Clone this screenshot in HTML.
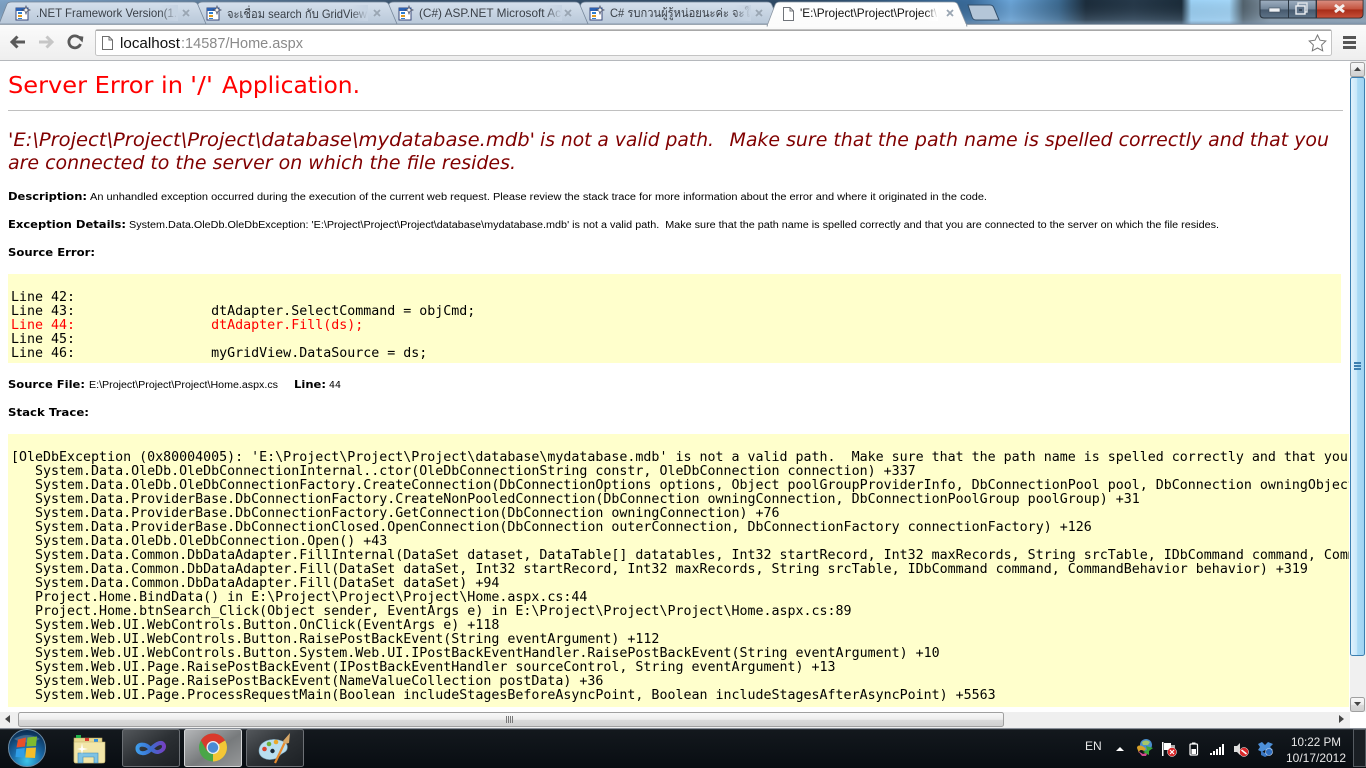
<!DOCTYPE html>
<html><head><meta charset="utf-8"><title>Server Error</title>
<style>
html,body{margin:0;padding:0;width:1366px;height:768px;overflow:hidden;background:#fff}
svg{display:block}
text{white-space:pre}
.tab{font:12px "Liberation Sans","WenQuanYi Zen Hei",sans-serif;fill:#3a4048}
.lab{font:bold 11px "DejaVu Sans",sans-serif;fill:#000}
.sm{font:10px "Liberation Sans",sans-serif;fill:#000}
.mono{font:13.305px "DejaVu Sans Mono","Liberation Mono",monospace;fill:#000}
.tray{font:12px "Liberation Sans",sans-serif;fill:#e8e8e8}
</style></head><body>
<svg xmlns="http://www.w3.org/2000/svg" width="1366" height="768" viewBox="0 0 1366 768">
<defs>
<linearGradient id="sky" x1="0" x2="1" y1="0" y2="0">
<stop offset="0" stop-color="#7fa4c8"/><stop offset=".3" stop-color="#39536d"/><stop offset=".6" stop-color="#2e4a66"/>
<stop offset=".71" stop-color="#3a6c9c"/><stop offset=".74" stop-color="#6ba5d8"/><stop offset=".775" stop-color="#3d6b92"/>
<stop offset=".795" stop-color="#1c2d3c"/><stop offset=".83" stop-color="#26394a"/><stop offset=".865" stop-color="#1b2c3a"/>
<stop offset=".872" stop-color="#9dd2f6"/><stop offset=".9" stop-color="#a3d6f8"/><stop offset=".91" stop-color="#54646f"/>
<stop offset=".93" stop-color="#8496a6"/><stop offset="1" stop-color="#8a9cae"/>
</linearGradient>
<linearGradient id="skyv" x1="0" x2="0" y1="0" y2="1"><stop offset="0" stop-color="#000" stop-opacity="0"/><stop offset=".8" stop-color="#9fb8cf" stop-opacity=".22"/><stop offset="1" stop-color="#6c8199" stop-opacity=".8"/></linearGradient>
<linearGradient id="tabg" x1="0" x2="0" y1="0" y2="1"><stop offset="0" stop-color="#d5e0ec"/><stop offset="1" stop-color="#b9c8d9"/></linearGradient>
<linearGradient id="atab" x1="0" x2="0" y1="0" y2="1"><stop offset="0" stop-color="#fff"/><stop offset="1" stop-color="#fbfbfb"/></linearGradient>
<linearGradient id="tool" x1="0" x2="0" y1="0" y2="1"><stop offset="0" stop-color="#fbfbfb"/><stop offset="1" stop-color="#eeeeee"/></linearGradient>
<linearGradient id="fade" x1="0" x2="1" y1="0" y2="0"><stop offset="0" stop-color="#c6d3e2" stop-opacity="0"/><stop offset="1" stop-color="#c6d3e2"/></linearGradient>
<linearGradient id="fadew" x1="0" x2="1" y1="0" y2="0"><stop offset="0" stop-color="#fff" stop-opacity="0"/><stop offset="1" stop-color="#fff"/></linearGradient>
<linearGradient id="ctl" x1="0" x2="0" y1="0" y2="1"><stop offset="0" stop-color="#9fb0c2"/><stop offset=".5" stop-color="#73869a"/><stop offset=".55" stop-color="#475a6e"/><stop offset="1" stop-color="#5f7489"/></linearGradient>
<linearGradient id="cls" x1="0" x2="0" y1="0" y2="1"><stop offset="0" stop-color="#d99083"/><stop offset=".5" stop-color="#c5543f"/><stop offset=".55" stop-color="#a82c18"/><stop offset="1" stop-color="#c8513a"/></linearGradient>
<linearGradient id="hth" x1="0" x2="0" y1="0" y2="1"><stop offset="0" stop-color="#f9f9f9"/><stop offset=".5" stop-color="#ececec"/><stop offset=".55" stop-color="#dadada"/><stop offset="1" stop-color="#d0d0d0"/></linearGradient>
<linearGradient id="vth" x1="0" x2="1" y1="0" y2="0"><stop offset="0" stop-color="#e3f3fd"/><stop offset=".45" stop-color="#c8e7fa"/><stop offset=".5" stop-color="#aadaf5"/><stop offset="1" stop-color="#9fd3f1"/></linearGradient>
<linearGradient id="tb" x1="0" x2="0" y1="0" y2="1"><stop offset="0" stop-color="#14191e"/><stop offset="1" stop-color="#080d12"/></linearGradient>
<linearGradient id="b1" x1="0" x2="1" y1="0" y2="1"><stop offset="0" stop-color="#54585c"/><stop offset=".5" stop-color="#2c3034"/><stop offset="1" stop-color="#1c2024"/></linearGradient>
<linearGradient id="b2" x1="0" x2="1" y1="0" y2="1"><stop offset="0" stop-color="#b5b7b9"/><stop offset=".55" stop-color="#777a7c"/><stop offset="1" stop-color="#969899"/></linearGradient>
<radialGradient id="orb" cx=".5" cy=".85" r=".8"><stop offset="0" stop-color="#3ec5ea"/><stop offset=".5" stop-color="#1a6aa8"/><stop offset="1" stop-color="#0b2f55"/></radialGradient>
<linearGradient id="inf" gradientUnits="userSpaceOnUse" x1="135" x2="166" y1="748" y2="748"><stop offset="0" stop-color="#3fa2ee"/><stop offset=".5" stop-color="#3a6fd0"/><stop offset="1" stop-color="#7a3cc0"/></linearGradient>
<clipPath id="stk"><rect x="8" y="434" width="1341" height="273"/></clipPath>
<clipPath id="c1"><rect x="30" y="3" width="148" height="20"/></clipPath>
<clipPath id="c2"><rect x="222" y="3" width="146" height="20"/></clipPath>
<clipPath id="c3"><rect x="414" y="3" width="148" height="20"/></clipPath>
<clipPath id="c4"><rect x="606" y="3" width="145" height="20"/></clipPath>
<clipPath id="c5"><rect x="797" y="3" width="141" height="20"/></clipPath>
<path id="t" d="M-1 24L7 4Q8 2 12 2L193 2Q197 2 198 5L206 24Z"/>
<g id="fav"><rect x="0" y="2" width="12" height="12" fill="#fff" stroke="#3a4a7a"/><rect x="0" y="2" width="12" height="3" fill="#2c62b4"/><rect x="2" y="6" width="4" height="2" fill="#2e7fd0"/><rect x="2" y="9" width="4" height="2" fill="#e09a20"/><rect x="2" y="12" width="4" height="1" fill="#2e7fd0"/><path d="M10 0L11 3L14 4L11 5L10 8L9 5L6 4L9 3Z" fill="#fff" stroke="#404860" stroke-width=".7"/></g>
<path id="x" d="M0 0L6 6M6 0L0 6" stroke="#9aa6b3" stroke-width="1.800" fill="none"/>
</defs>

<!-- Aero background -->
<rect width="1366" height="25" fill="url(#sky)"/>
<rect width="1366" height="25" fill="url(#skyv)"/>

<!-- Tabs -->
<g fill="url(#tabg)" stroke="#76879a" stroke-width=".8">
<use href="#t" x="574"/><use href="#t" x="382"/><use href="#t" x="191"/><use href="#t" x="0"/>
</g>
<rect y="24" width="1366" height="1" fill="#9aa5b0"/>

<use href="#fav" x="16" y="6"/><use href="#fav" x="207" y="6"/><use href="#fav" x="399" y="6"/><use href="#fav" x="590" y="6"/>
<g clip-path="url(#c1)"><text class="tab" x="36" y="17" textLength="141" lengthAdjust="spacingAndGlyphs">.NET Framework Version(1.</text></g>
<rect x="160" y="5" width="18" height="16" fill="url(#fade)"/>
<g clip-path="url(#c2)"><text class="tab" x="227" y="18" textLength="140" lengthAdjust="spacingAndGlyphs">จะเชื่อม search กับ GridView</text></g>
<rect x="351" y="5" width="17" height="16" fill="url(#fade)"/>
<g clip-path="url(#c3)"><text class="tab" x="419" y="17" textLength="142" lengthAdjust="spacingAndGlyphs">(C#) ASP.NET Microsoft Ac</text></g>
<rect x="545" y="5" width="17" height="16" fill="url(#fade)"/>
<g clip-path="url(#c4)"><text class="tab" x="610" y="17" textLength="140" lengthAdjust="spacingAndGlyphs">C# รบกวนผู้รู้หน่อยนะค่ะ จะใ</text></g>
<rect x="734" y="5" width="17" height="16" fill="url(#fade)"/>
<use href="#x" x="183" y="10"/><use href="#x" x="374" y="10"/><use href="#x" x="565" y="10"/><use href="#x" x="756" y="10"/>

<!-- Toolbar -->
<rect y="25" width="1366" height="35" fill="url(#tool)"/>
<rect y="60" width="1366" height="1" fill="#b5b8bc"/>

<!-- Active tab -->
<path d="M767 26L775 5Q776 2 780 2L953 2Q957 2 958 5L967 26Z" fill="url(#atab)" stroke="#8b96a2" stroke-width=".8"/>
<rect x="768" y="24" width="198" height="3" fill="#fcfcfc"/>
<path d="M783.500 7.500H790L793.500 11V20.500H783.500Z M790 7.500V11H793.500" fill="#fff" stroke="#70747a"/>
<g clip-path="url(#c5)"><text class="tab" x="800" y="17" style="fill:#111" textLength="137" lengthAdjust="spacingAndGlyphs">'E:\Project\Project\Project\</text></g>
<rect x="925" y="5" width="13" height="16" fill="url(#fadew)"/>
<use href="#x" x="947" y="10"/>

<!-- New tab button -->
<path d="M968 5L990 5Q993 5 994 8L999 20L976 20Q973 20 972 17Z" fill="#b4c6d8" stroke="#33506c" stroke-width="1"/>

<!-- Window controls -->
<path d="M1260 0V14Q1260 18 1264 18H1359Q1363 18 1363 14V0Z" fill="url(#ctl)" stroke="#28333e"/>
<path d="M1316 0H1363V14Q1363 18 1359 18H1316Z" fill="url(#cls)" stroke="#3a2a2a" stroke-width=".7"/>
<rect x="1288" y="0" width="1" height="18" fill="#2a3642"/>
<rect x="1316" y="0" width="1" height="18" fill="#2a3642"/>
<rect x="1269" y="8" width="11" height="4" fill="#eef1f4" stroke="#3b4a59" stroke-width=".6"/>
<rect x="1298" y="3" width="9" height="9" fill="none" stroke="#dfe4e9" stroke-width="1.400"/>
<rect x="1296" y="6" width="9" height="8" fill="#60748a" stroke="#eef1f4" stroke-width="1.400"/>
<rect x="1299" y="9" width="3" height="2" fill="#39485a"/>
<path d="M1335 5L1344 12M1344 5L1335 12" stroke="#f4f0ee" stroke-width="3"/>

<!-- Nav buttons -->
<path d="M25 42H12M17.500 36.500L12 42L17.500 47.500" fill="none" stroke="#5a5a5a" stroke-width="3"/>
<path d="M39 42H52M46.500 36.500L52 42L46.500 47.500" fill="none" stroke="#c6c6c6" stroke-width="3"/>
<path d="M80.500 44A6 6 0 1 1 79 37.500" fill="none" stroke="#5a5a5a" stroke-width="2.800"/>
<path d="M75 36H83V42Z" fill="#5a5a5a" transform="rotate(8 79 39)"/>

<!-- Omnibox -->
<rect x="95.500" y="29.500" width="1236" height="26" rx="2" fill="#fff" stroke="#c4c4c4"/>
<rect x="96" y="30" width="1235" height="1" fill="#a8a8a8"/>
<path d="M102.500 36.500H109L112.500 40V49.500H102.500Z M109 36.500V40H112.500" fill="#fff" stroke="#6e6e6e"/>
<text x="120" y="48" font-family="Liberation Sans" font-size="14.500" textLength="60" lengthAdjust="spacingAndGlyphs" fill="#111">localhost</text>
<text x="181" y="48" font-family="Liberation Sans" font-size="14.500" textLength="122" lengthAdjust="spacingAndGlyphs" fill="#8a8a8a">:14587/Home.aspx</text>
<path d="M1317.500 35L1320 40.200L1325.800 41L1321.600 45L1322.700 50.800L1317.500 48L1312.300 50.800L1313.400 45L1309.200 41L1315 40.200Z" fill="#fff" stroke="#777" stroke-width="1"/>
<rect x="1343" y="36" width="13" height="3" fill="#555"/><rect x="1343" y="41" width="13" height="3" fill="#555"/><rect x="1343" y="46" width="13" height="3" fill="#555"/>

<!-- Page -->
<rect y="61" width="1366" height="667" fill="#fff"/>
<g font-family="DejaVu Sans" font-size="23" fill="#f00">
<text x="8" y="93" textLength="175" lengthAdjust="spacingAndGlyphs">Server Error in</text>
<text x="190" y="93" textLength="23" lengthAdjust="spacingAndGlyphs">'/'</text>
<text x="222" y="93" textLength="138" lengthAdjust="spacingAndGlyphs">Application.</text>
</g>
<rect x="8" y="110" width="1335" height="1" fill="#c0c0c0"/>
<g font-family="DejaVu Sans" font-style="italic" font-size="19" fill="#800000">
<text x="8" y="146" textLength="527" lengthAdjust="spacingAndGlyphs">'E:\Project\Project\Project\database\mydatabase.mdb'</text>
<text x="540" y="146" textLength="174" lengthAdjust="spacingAndGlyphs">is not a valid path.</text>
<text x="729.500" y="146" textLength="599.500" lengthAdjust="spacingAndGlyphs">Make sure that the path name is spelled correctly and that you</text>
<text x="8" y="169" textLength="508" lengthAdjust="spacingAndGlyphs">are connected to the server on which the file resides.</text>
</g>

<text class="lab" x="8" y="200" textLength="79" lengthAdjust="spacingAndGlyphs">Description:</text>
<text class="sm" x="90" y="200" textLength="897" lengthAdjust="spacingAndGlyphs">An unhandled exception occurred during the execution of the current web request. Please review the stack trace for more information about the error and where it originated in the code.</text>
<text class="lab" x="8" y="228" textLength="118" lengthAdjust="spacingAndGlyphs">Exception Details:</text>
<text class="sm" x="129" y="228" textLength="1090" lengthAdjust="spacingAndGlyphs">System.Data.OleDb.OleDbException: 'E:\Project\Project\Project\database\mydatabase.mdb' is not a valid path.  Make sure that the path name is spelled correctly and that you are connected to the server on which the file resides.</text>
<text class="lab" x="8" y="256" textLength="87" lengthAdjust="spacingAndGlyphs">Source Error:</text>

<rect x="8" y="274" width="1333" height="89" fill="#ffc"/>
<text class="mono" x="11" y="301">Line 42:</text>
<text class="mono" x="11" y="315">Line 43:                 dtAdapter.SelectCommand = objCmd;</text>
<text class="mono" x="11" y="329" style="fill:#f00">Line 44:                 dtAdapter.Fill(ds);</text>
<text class="mono" x="11" y="343">Line 45:</text>
<text class="mono" x="11" y="357">Line 46:                 myGridView.DataSource = ds;</text>

<text class="lab" x="8" y="388" textLength="77" lengthAdjust="spacingAndGlyphs">Source File:</text>
<text class="sm" x="89" y="388" textLength="189" lengthAdjust="spacingAndGlyphs">E:\Project\Project\Project\Home.aspx.cs</text>
<text class="lab" x="294" y="388" textLength="32" lengthAdjust="spacingAndGlyphs">Line:</text>
<text x="329" y="388" font-family="DejaVu Sans" font-size="10" textLength="12" lengthAdjust="spacingAndGlyphs">44</text>
<text class="lab" x="8" y="416" textLength="81" lengthAdjust="spacingAndGlyphs">Stack Trace:</text>

<rect x="8" y="434" width="1341" height="273" fill="#ffc"/>
<g clip-path="url(#stk)" class="mono">
<text class="mono" x="11" y="461">[OleDbException (0x80004005): 'E:\Project\Project\Project\database\mydatabase.mdb' is not a valid path.  Make sure that the path name is spelled correctly and that you are connected</text>
<text class="mono" x="11" y="475">   System.Data.OleDb.OleDbConnectionInternal..ctor(OleDbConnectionString constr, OleDbConnection connection) +337</text>
<text class="mono" x="11" y="489">   System.Data.OleDb.OleDbConnectionFactory.CreateConnection(DbConnectionOptions options, Object poolGroupProviderInfo, DbConnectionPool pool, DbConnection owningObject) +86</text>
<text class="mono" x="11" y="503">   System.Data.ProviderBase.DbConnectionFactory.CreateNonPooledConnection(DbConnection owningConnection, DbConnectionPoolGroup poolGroup) +31</text>
<text class="mono" x="11" y="517">   System.Data.ProviderBase.DbConnectionFactory.GetConnection(DbConnection owningConnection) +76</text>
<text class="mono" x="11" y="531">   System.Data.ProviderBase.DbConnectionClosed.OpenConnection(DbConnection outerConnection, DbConnectionFactory connectionFactory) +126</text>
<text class="mono" x="11" y="545">   System.Data.OleDb.OleDbConnection.Open() +43</text>
<text class="mono" x="11" y="559">   System.Data.Common.DbDataAdapter.FillInternal(DataSet dataset, DataTable[] datatables, Int32 startRecord, Int32 maxRecords, String srcTable, IDbCommand command, CommandBehavior behavior) +162</text>
<text class="mono" x="11" y="573">   System.Data.Common.DbDataAdapter.Fill(DataSet dataSet, Int32 startRecord, Int32 maxRecords, String srcTable, IDbCommand command, CommandBehavior behavior) +319</text>
<text class="mono" x="11" y="587">   System.Data.Common.DbDataAdapter.Fill(DataSet dataSet) +94</text>
<text class="mono" x="11" y="601">   Project.Home.BindData() in E:\Project\Project\Project\Home.aspx.cs:44</text>
<text class="mono" x="11" y="615">   Project.Home.btnSearch_Click(Object sender, EventArgs e) in E:\Project\Project\Project\Home.aspx.cs:89</text>
<text class="mono" x="11" y="629">   System.Web.UI.WebControls.Button.OnClick(EventArgs e) +118</text>
<text class="mono" x="11" y="643">   System.Web.UI.WebControls.Button.RaisePostBackEvent(String eventArgument) +112</text>
<text class="mono" x="11" y="657">   System.Web.UI.WebControls.Button.System.Web.UI.IPostBackEventHandler.RaisePostBackEvent(String eventArgument) +10</text>
<text class="mono" x="11" y="671">   System.Web.UI.Page.RaisePostBackEvent(IPostBackEventHandler sourceControl, String eventArgument) +13</text>
<text class="mono" x="11" y="685">   System.Web.UI.Page.RaisePostBackEvent(NameValueCollection postData) +36</text>
<text class="mono" x="11" y="699">   System.Web.UI.Page.ProcessRequestMain(Boolean includeStagesBeforeAsyncPoint, Boolean includeStagesAfterAsyncPoint) +5563</text>
</g>

<!-- Vertical scrollbar -->
<rect x="1350" y="61" width="16" height="651" fill="#f0f0f0"/>
<rect x="1350.500" y="62.500" width="14" height="14" rx="2" fill="url(#hth)" stroke="#a0a0a0"/>
<path d="M1354 71H1361L1357.500 67Z" fill="#444"/>
<rect x="1350.500" y="77.500" width="14" height="578" rx="2" fill="url(#vth)" stroke="#3c7fb1"/>
<g fill="#3c7fb1"><rect x="1354" y="362" width="7" height="2"/><rect x="1354" y="365" width="7" height="2"/><rect x="1354" y="368" width="7" height="2"/></g>
<rect x="1350.500" y="697.500" width="14" height="14" rx="2" fill="url(#hth)" stroke="#a0a0a0"/>
<path d="M1354 702H1361L1357.500 706Z" fill="#444"/>

<!-- Horizontal scrollbar -->
<rect x="0" y="712" width="1350" height="16" fill="#efefef"/>
<path d="M10 715V723L5 719Z" fill="#444"/>
<rect x="18.500" y="712.500" width="985" height="14" rx="2" fill="url(#hth)" stroke="#a0a0a0"/>
<g fill="#777"><rect x="506" y="716" width="1" height="7"/><rect x="508" y="716" width="1" height="7"/><rect x="510" y="716" width="1" height="7"/><rect x="512" y="716" width="1" height="7"/></g>
<path d="M1339 715V723L1344 719Z" fill="#444"/>
<rect x="1350" y="712" width="16" height="16" fill="#fff"/>

<!-- Taskbar -->
<rect y="728" width="1366" height="40" fill="url(#tb)"/>
<rect y="728" width="1366" height="1" fill="#8a9099"/>
<rect y="729" width="1366" height="1" fill="#2c3238"/>

<!-- Start orb -->
<circle cx="27" cy="748" r="18.500" fill="url(#orb)" stroke="#6b8ba5" stroke-width="1"/>
<path d="M14 739Q27 731 40 739Q27 746 14 739Z" fill="#fff" opacity=".2"/>
<path d="M18 739.500L26 737.500L25 746.500L16.500 747.500Z" fill="#e8502a"/>
<path d="M27.500 737.500L37 736.500L36 746L26.500 746.500Z" fill="#7fbb2f"/>
<path d="M16.300 749L24.800 748L23.800 757.500L15.500 757Z" fill="#2f9ee8"/>
<path d="M26.300 748L36 747.500L35 758L25.300 757.500Z" fill="#f4bd2a"/>

<!-- Folder -->
<path d="M74 738H102V763H76Q74 763 74 761Z" fill="#e8d88f" stroke="#b7a65e" stroke-width=".6"/>
<rect x="76" y="735" width="5" height="3" fill="#21b34a"/><rect x="85" y="738" width="4" height="3" fill="#d8382e"/><rect x="94" y="739" width="4" height="3" fill="#2e8fe0"/>
<path d="M74 742H105V761Q105 763 103 763H76Q74 763 74 761Z" fill="#f2e6a8" stroke="#bcae6a" stroke-width=".6"/>
<path d="M78 753H98V763H94V757H83V763H78Z" fill="#7fc3e4" stroke="#3f88b4" stroke-width=".6"/>
<path d="M82 743L83 748L88 749L83 750L82 754L81 750L77 749L81 748Z" fill="#fff"/>

<!-- Taskbar buttons -->
<rect x="122.500" y="729.500" width="57" height="37" rx="2" fill="url(#b1)" stroke="#6c7075"/>
<rect x="184.500" y="729.500" width="57" height="37" rx="2" fill="url(#b2)" stroke="#d4d6d8"/>
<rect x="246.500" y="729.500" width="57" height="37" rx="2" fill="url(#b1)" stroke="#6c7075"/>

<!-- VS infinity -->
<path d="M150 748.500C146 743.500 137 743 137.500 749C138 754.500 146 754.500 150.500 749.500C154.500 745 161 740.500 163.500 744.500C166 749 159 753.500 155 751.500C153 750.500 151.500 749 150 748.500Z" fill="none" stroke="url(#inf)" stroke-width="4"/>

<!-- Chrome -->
<circle cx="213" cy="747.500" r="14" fill="#4aa648"/>
<path d="M213 733.500A14 14 0 0 1 225.100 740.500L213 747.500L200.900 740.500A14 14 0 0 1 213 733.500Z" fill="#d9392c"/>
<path d="M225.100 740.500A14 14 0 0 1 213 761.500L213 747.500Z" fill="#f4c636"/>
<path d="M200.900 740.500L207 751L213 747.500Z" fill="#d9392c"/>
<circle cx="213" cy="747.500" r="6.500" fill="#e9eef4"/>
<circle cx="213" cy="747.500" r="5.200" fill="#4a8ad4"/>

<!-- Paint palette -->
<path d="M259 751C259 741 272 737 282 741C290 744 288 751 283 753C279 755 279 758 274 759C266 761 259 757 259 751Z" fill="#b9dff0" stroke="#7fa9c0" stroke-width=".6"/>
<circle cx="264.500" cy="749" r="2.300" fill="#d8432e"/><circle cx="269" cy="744" r="2.300" fill="#6cae38"/><circle cx="276" cy="742" r="2.300" fill="#eba92a"/><circle cx="272.500" cy="751" r="2.200" fill="#1a2a38"/>
<path d="M275 763L285 742" stroke="#e68a2e" stroke-width="2.200"/>
<path d="M283 741L290 733L289 743L285 744Z" fill="#d8a868"/>

<!-- Tray -->
<text class="tray" x="1085" y="750" font-size="11.500">EN</text>
<path d="M1116 751H1124L1120 747Z" fill="#fff"/>
<circle cx="1146" cy="745" r="6" fill="#4a8fcc"/><path d="M1142 742Q1146 739 1150 742L1148 745H1143Z" fill="#a6c66a"/>
<path d="M1137 748C1137 744 1143 745 1146 749L1144 751C1141 749 1139 750 1139 753Z" fill="#d8a028"/>
<path d="M1138 751L1143 754L1148 752L1146 756L1142 756Z" fill="#d34a8e"/>
<path d="M1146 746L1153 748L1149 751L1149 755L1143 752L1147 750Z" fill="#3aa838"/>
<rect x="1162" y="742" width="1.500" height="14" fill="#fff"/>
<path d="M1164 743H1171V750H1164Z" fill="#fff"/><path d="M1171 745H1175V748H1171Z" fill="#aaa"/>
<circle cx="1172" cy="752" r="4.500" fill="#d8282a" stroke="#fff" stroke-width=".5"/>
<path d="M1170 750L1174 754M1174 750L1170 754" stroke="#fff" stroke-width="1.200"/>
<rect x="1190" y="744" width="7.500" height="11" rx="1" fill="#0c1116" stroke="#fff" stroke-width="1.200"/>
<rect x="1192" y="742.500" width="3.500" height="1.500" fill="#fff"/>
<rect x="1191.500" y="749" width="4.500" height="5" fill="#fff"/>
<g fill="#fff"><rect x="1210" y="753" width="2" height="2"/><rect x="1213" y="751" width="2" height="4"/><rect x="1216" y="749" width="2" height="6"/><rect x="1219" y="747" width="2" height="8"/><rect x="1222" y="744" width="2" height="11"/></g>
<path d="M1234 746H1237L1240 743V755L1237 752H1234Z" fill="#ddd"/>
<circle cx="1244" cy="752" r="4.500" fill="#d8282a" stroke="#fff" stroke-width=".5"/>
<path d="M1241.500 750L1246.500 754" stroke="#fff" stroke-width="1.500"/>
<path d="M1258 744L1262 742L1265 745L1268 742L1273 744L1270 747L1273 750L1268 752L1265 750L1262 752L1258 750L1260 747Z" fill="#4d8fd8"/>
<path d="M1261 751L1265 753L1269 751V755L1265 757L1261 755Z" fill="#3a78c4"/>
<circle cx="1269" cy="752" r="3.500" fill="#2f6ebf" stroke="#cfe0f4" stroke-width=".6"/>
<text class="tray" x="1291" y="746" textLength="50" lengthAdjust="spacingAndGlyphs">10:22 PM</text>
<text class="tray" x="1286" y="762" textLength="60" lengthAdjust="spacingAndGlyphs">10/17/2012</text>

<!-- Show desktop -->
<rect x="1353.500" y="729.500" width="12" height="37" fill="#1a1f24" stroke="#555b61"/>
</svg>
</body></html>
